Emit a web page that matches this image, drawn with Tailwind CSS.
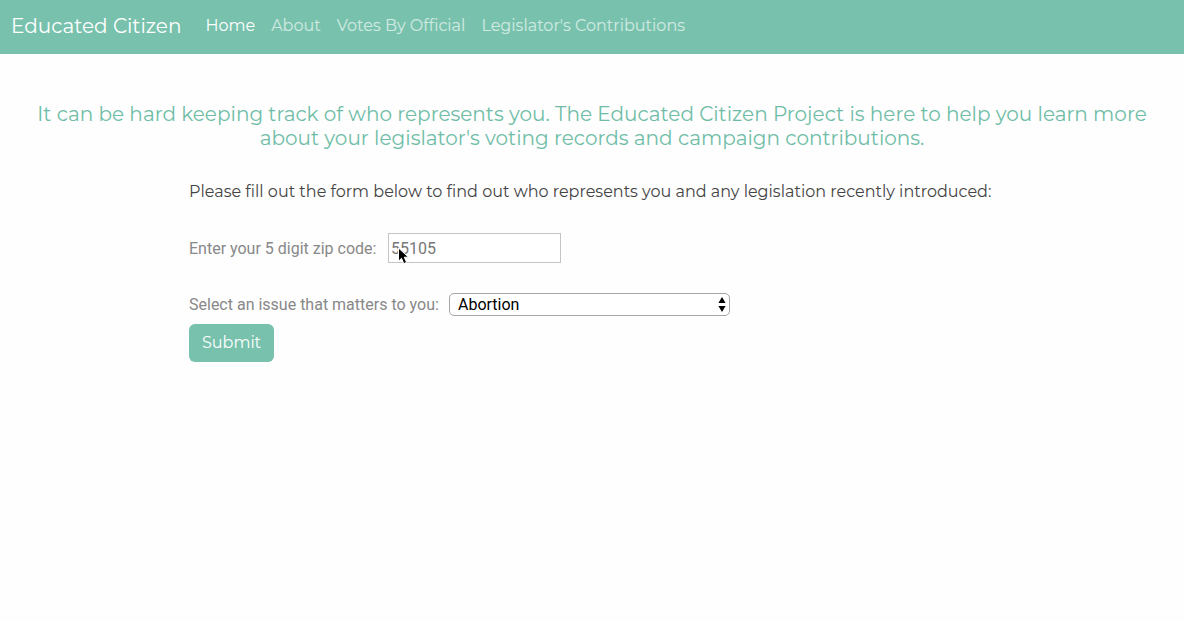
<!DOCTYPE html>
<html lang="en">
<head>
<meta charset="utf-8">
<meta name="viewport" content="width=device-width, initial-scale=1">
<title>Educated Citizen</title>
<script src="https://cdn.jsdelivr.net/npm/@tailwindcss/browser@4"></script>
</head>
<body class="min-h-screen bg-[#fefefe] font-['Montserrat','Inter',sans-serif] text-base text-[#444444]">
<nav class="flex h-[54px] items-center gap-6 bg-[#78c2ad] px-[11px] pb-0.5">
  <a href="#" class="text-xl text-white">Educated Citizen</a>
  <div class="flex gap-4 leading-6 text-white/65">
    <a href="#" class="text-white">Home</a>
    <a href="#">About</a>
    <a href="#">Votes By Official</a>
    <a href="#">Legislator's Contributions</a>
  </div>
</nav>
<main class="px-4 pt-12">
  <h1 class="mx-auto max-w-[1140px] text-center text-xl leading-6 text-[#6fbda7]">It can be hard keeping track of who represents you. The Educated Citizen Project is here to help you learn more about your legislator's voting records and campaign contributions.</h1>
  <form class="ml-[173px] flex flex-col items-start pt-[30px]">
    <p class="leading-6">Please fill out the form below to find out who represents you and any legislation recently introduced:</p>
    <div class="mt-[29px] flex items-center gap-1 font-['Roboto',sans-serif] text-[#888888]">
      <label for="zip" class="w-[195px] pt-px">Enter your 5 digit zip code:</label>
      <div class="relative">
        <input id="zip" type="text" placeholder="55105" class="block h-[30px] w-[173px] border border-[#c4c4c4] bg-white px-0.5 outline-none placeholder:text-[#777777]">
        <svg class="pointer-events-none absolute left-[9px] top-[14px] h-[19px] w-[13px]" viewBox="0 0 13 19" aria-hidden="true"><path d="M1.5 1v13.2l3-2.9 2.3 5.3 2.8-1.2-2.3-5.2h4.2z" fill="#000" stroke="#fff" stroke-width="1"/></svg>
      </div>
    </div>
    <div class="mt-[30px] flex items-center gap-1 font-['Roboto',sans-serif] text-[#888888]">
      <label for="issue" class="w-[256px] leading-[23px]">Select an issue that matters to you:</label>
      <div class="relative">
        <select id="issue" class="block h-[23px] w-[281px] appearance-none rounded-[5px] border border-[#a6a6a6] bg-white px-2 leading-5 text-black">
          <option>Abortion</option>
        </select>
        <svg class="pointer-events-none absolute right-1 top-1 h-4 w-2" viewBox="0 0 8 16" aria-hidden="true"><path d="M4 0l3.6 6H.4zM4 15L.4 9h7.2z" fill="#000"/></svg>
      </div>
    </div>
    <button type="submit" class="mt-2 h-[38px] rounded-md bg-[#78c2ad] px-[13px] leading-6 text-white">Submit</button>
  </form>
</main>
</body>
</html>
